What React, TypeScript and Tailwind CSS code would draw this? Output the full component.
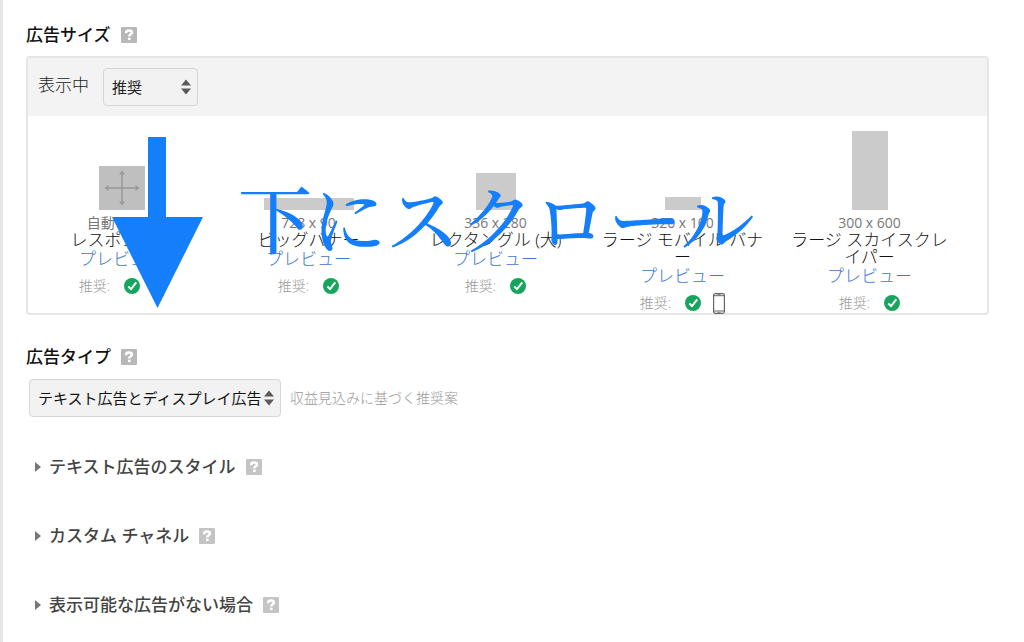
import React, { useState } from 'react';

interface AdSize {
  id: string;
  size: string;
  name: string;
  shape: string;
  responsive?: boolean;
  mobile?: boolean;
}

const AD_SIZES: AdSize[] = [
  { id: 'responsive', size: '自動サイズ', name: 'レスポンシブ', shape: 'w-[46px] h-11', responsive: true, mobile: true },
  { id: 'big-banner', size: '728 x 90', name: 'ビッグバナー', shape: 'w-[90px] h-3' },
  { id: 'rectangle', size: '336 x 280', name: 'レクタングル (大)', shape: 'w-10 h-[37px]' },
  { id: 'mobile-banner', size: '320 x 100', name: 'ラージ モバイル バナー', shape: 'w-9 h-[13px]', mobile: true },
  { id: 'skyscraper', size: '300 x 600', name: 'ラージ スカイスクレイパー', shape: 'w-9 h-[79px]' },
];

const SECTIONS = ['テキスト広告のスタイル', 'カスタム チャネル', '表示可能な広告がない場合'];

const HelpButton: React.FC<{ dim?: boolean }> = ({ dim }) => (
  <button type="button" aria-label="ヘルプ" className={`shrink-0 ${dim ? 'text-[#c4c4c4]' : 'text-[#b8b8b8]'}`}>
    <svg width="16" height="16" viewBox="0 0 16 16" className="block">
      <rect width="16" height="16" rx="1" fill="currentColor" />
      <path d="M5.2 6.200V5.200C5.200 4 6.400 3.400 8 3.400s2.900.7 2.900 2c0 1.900-2.600 1.700-2.600 4" fill="none" stroke="#fff" strokeWidth="2.500" />
      <rect x="7" y="10.700" width="2.600" height="2.400" fill="#fff" />
    </svg>
  </button>
);

const SelectArrows = () => (
  <svg width="12" height="16" viewBox="0 0 12 16" className="absolute right-[6px] top-[11px] pointer-events-none">
    <path d="M6 0.500 11 6.500H1zM6 15.500 11 9.500H1z" fill="#5a5a5a" />
  </svg>
);

const CheckIcon = () => (
  <svg width="16" height="16" viewBox="0 0 16 16" className="shrink-0">
    <circle cx="8" cy="8" r="8" fill="#17a55d" />
    <path d="M4.300 8.500 7 11.100 12.300 4.300" fill="none" stroke="#fff" strokeWidth="2" />
  </svg>
);

const PhoneIcon = () => (
  <svg width="12" height="21" viewBox="0 0 12 21" className="shrink-0">
    <rect x="0.600" y="0.600" width="10.800" height="19.800" rx="1.800" fill="#fff" stroke="#666" strokeWidth="1.200" />
    <path d="M1 2.700h10M1 18h10" stroke="#666" />
    <path d="M4.500 1.600h3M4.500 19.300h3" stroke="#666" strokeWidth="0.800" />
  </svg>
);

const MoveIcon = () => (
  <svg width="38" height="38" viewBox="0 0 38 38" fill="#999" stroke="#999">
    <path d="M19 4v30M4 19h30" strokeWidth="1.500" />
    <path d="M19 1.500l3 4h-6zM19 36.500l3-4h-6zM1.500 19l4-3v6zM36.500 19l-4-3v6z" stroke="none" />
  </svg>
);

const AdSizeCard: React.FC<{ ad: AdSize }> = ({ ad }) => (
  <li className="flex-1 min-w-0 px-2 flex flex-col items-center text-center">
    <div className="h-[94px] flex items-end">
      <div className={`flex items-center justify-center ${ad.responsive ? 'bg-[#bfbfbf]' : 'bg-[#cbcbcb]'} ${ad.shape}`}>
        {ad.responsive && <MoveIcon />}
      </div>
    </div>
    <span className="mt-1 text-sm leading-[17px] font-normal text-[#777]">{ad.size}</span>
    <span className="text-[17px] leading-[17px] text-[#111] break-all">{ad.name}</span>
    <a href="#preview" className="mt-px text-[17px] leading-5 text-[#3f78d0]">プレビュー</a>
    <div className="mt-2 h-[18px] flex items-center">
      <span className="text-sm text-[#999] mr-[14px]">推奨:</span>
      <CheckIcon />
      {ad.mobile && <span className="ml-3"><PhoneIcon /></span>}
    </div>
  </li>
);

const App = () => {
  const [filter, setFilter] = useState('推奨');
  const [adType, setAdType] = useState('テキスト広告とディスプレイ広告');
  const [open, setOpen] = useState<string | null>(null);

  return (
    <main
      lang="ja"
      className="min-h-screen bg-white border-l-[3px] border-[#e6e6e6] pl-[23px] pr-[35px] pt-[23px] font-light font-['Open_Sans','Noto_Sans_CJK_JP',sans-serif]"
    >
      <section>
        <div className="flex items-center gap-[10px] h-6">
          <h2 className="text-[17px] leading-6 font-medium text-[#111]">広告サイズ</h2>
          <HelpButton />
        </div>

        <div className="relative mt-[9px] border-2 border-[#e6e6e6] rounded-sm">
          <div className="bg-[#f3f3f3] flex items-start gap-[14px] px-[10px] py-[10px]">
            <label htmlFor="size-filter" className="text-[17px] leading-[34px] text-[#222]">表示中</label>
            <div className="relative">
              <select
                id="size-filter"
                value={filter}
                onChange={(e) => setFilter(e.target.value)}
                className="block appearance-none w-[95px] h-[38px] pl-2 border border-[#d6d6d6] rounded-sm bg-[#f2f2f2] text-[15px] font-normal text-[#222]"
              >
                <option>推奨</option>
                <option>すべて</option>
              </select>
              <SelectArrows />
            </div>
          </div>

          <ul className="flex pr-6 pb-px">
            {AD_SIZES.map((ad) => (
              <AdSizeCard key={ad.id} ad={ad} />
            ))}
          </ul>

          {/* Scroll hint on top of the size list */}
          <svg width="91" height="171" viewBox="0 0 91 171" className="absolute left-[84px] top-[79px] pointer-events-none">
            <path d="M36 0h18v80h37L45.500 171 0 80h36z" fill="#157efb" />
          </svg>
          <p className="absolute left-[210px] top-[118px] text-[74px] leading-[80px] font-medium whitespace-nowrap text-[#157efb] pointer-events-none font-['Noto_Serif_CJK_JP','Noto_Sans_CJK_JP',serif]">
            下にスクロール
          </p>
        </div>
      </section>

      <section className="mt-[30px]">
        <div className="flex items-center gap-[10px] h-6">
          <h2 className="text-[17px] leading-6 font-medium text-[#111]">広告タイプ</h2>
          <HelpButton />
        </div>
        <div className="mt-[10px] ml-[3px] flex items-center gap-[9px]">
          <div className="relative">
            <select
              aria-label="広告タイプ"
              value={adType}
              onChange={(e) => setAdType(e.target.value)}
              className="block appearance-none w-[252px] h-[38px] pl-2 border border-[#d6d6d6] rounded-sm bg-[#f2f2f2] text-[15px] font-normal text-[#111]"
            >
              <option>テキスト広告とディスプレイ広告</option>
              <option>ディスプレイ広告のみ</option>
              <option>テキスト広告のみ</option>
            </select>
            <SelectArrows />
          </div>
          <span className="text-sm text-[#999]">収益見込みに基づく推奨案</span>
        </div>
      </section>

      <div className="mt-[38px] ml-2 flex flex-col gap-[45px]">
        {SECTIONS.map((title) => (
          <div key={title} className="flex items-center gap-[10px] h-6">
            <button
              type="button"
              aria-expanded={open === title}
              onClick={() => setOpen(open === title ? null : title)}
              className="flex items-center gap-2 text-[17px] leading-6 font-medium text-[#444]"
            >
              <svg width="7" height="10" viewBox="0 0 7 10">
                <path d="M1 0l6 5-6 5z" fill="#777" />
              </svg>
              {title}
            </button>
            <HelpButton dim />
          </div>
        ))}
      </div>
    </main>
  );
};

export default App;
